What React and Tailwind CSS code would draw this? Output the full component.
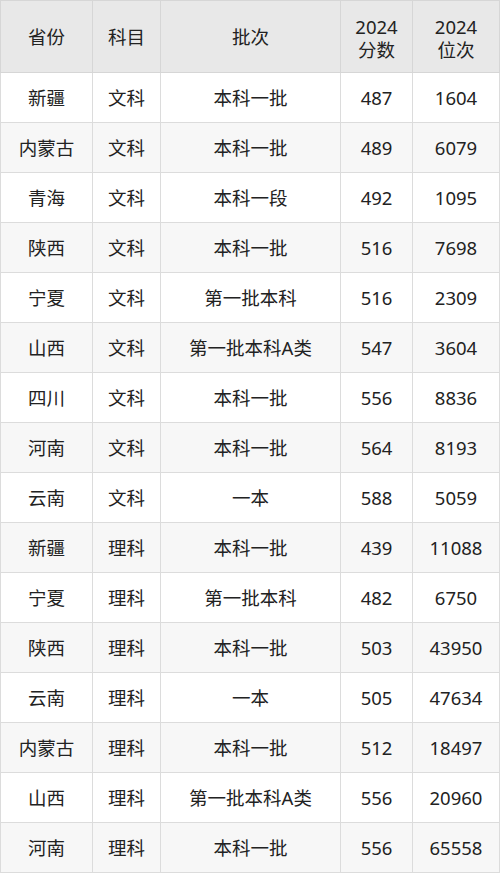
import React from 'react';

const rows = [
    ['新疆', '文科', '本科一批', '487', '1604'],
    ['内蒙古', '文科', '本科一批', '489', '6079'],
    ['青海', '文科', '本科一段', '492', '1095'],
    ['陕西', '文科', '本科一批', '516', '7698'],
    ['宁夏', '文科', '第一批本科', '516', '2309'],
    ['山西', '文科', '第一批本科A类', '547', '3604'],
    ['四川', '文科', '本科一批', '556', '8836'],
    ['河南', '文科', '本科一批', '564', '8193'],
    ['云南', '文科', '一本', '588', '5059'],
    ['新疆', '理科', '本科一批', '439', '11088'],
    ['宁夏', '理科', '第一批本科', '482', '6750'],
    ['陕西', '理科', '本科一批', '503', '43950'],
    ['云南', '理科', '一本', '505', '47634'],
    ['内蒙古', '理科', '本科一批', '512', '18497'],
    ['山西', '理科', '第一批本科A类', '556', '20960'],
    ['河南', '理科', '本科一批', '556', '65558'],
];

const App = () => {
    return (
        <div className="w-[500px] h-[873px] bg-white font-['Noto_Sans','Noto_Sans_CJK_SC',sans-serif] text-[#222] text-[18.5px]">
            <table className="w-[499px] border-collapse table-fixed">
                <colgroup>
                    <col className="w-[92px]" />
                    <col className="w-[68px]" />
                    <col className="w-[180px]" />
                    <col className="w-[72px]" />
                    <col className="w-[87px]" />
                </colgroup>
                <thead>
                    <tr className="h-[72px] bg-[#e8e8e8]">
                        <th className="border border-[#d6d6d6] font-normal">省份</th>
                        <th className="border border-[#d6d6d6] font-normal">科目</th>
                        <th className="border border-[#d6d6d6] font-normal">批次</th>
                        <th className="border border-[#d6d6d6] font-normal leading-[23px] pt-[3px]">2024<br />分数</th>
                        <th className="border border-[#d6d6d6] font-normal leading-[23px] pt-[3px]">2024<br />位次</th>
                    </tr>
                </thead>
                <tbody>
                    {rows.map((r, i) => (
                        <tr key={i} className={i % 2 === 1 ? 'h-[50px] bg-[#f7f7f7]' : 'h-[50px] bg-white'}>
                            {r.map((c, j) => (
                                <td key={j} className="border border-[#dcdcdc] text-center p-0">{c}</td>
                            ))}
                        </tr>
                    ))}
                </tbody>
            </table>
        </div>
    );
};

export default App;
